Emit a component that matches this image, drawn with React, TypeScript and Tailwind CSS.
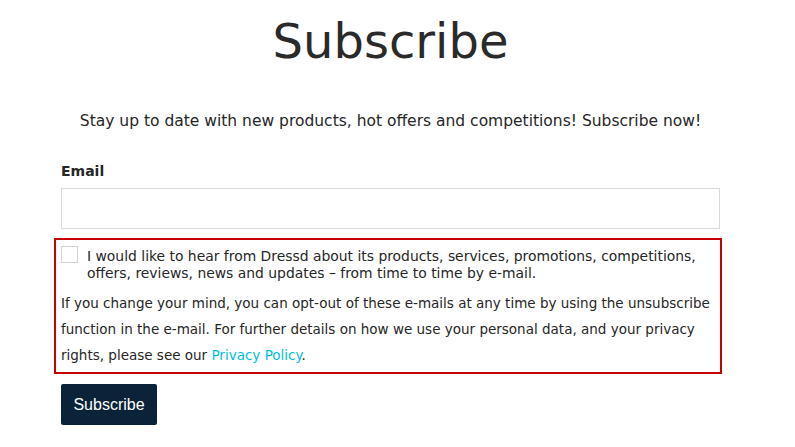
export default function App() {
  return (
    <div className="w-[795px] h-[447px] bg-white text-[#262626] font-['DejaVu_Sans',sans-serif] overflow-hidden">
      <div className="ml-[54px] w-[668px]">
        <div className="ml-[7px] w-[659px]">
          <h1 className="mt-[17px] text-center text-[48px] leading-[48px] font-normal text-[#2a2a2a]">
            Subscribe
          </h1>
          <p className="mt-[44px] text-center text-[15.5px] leading-[24px]">
            Stay up to date with new products, hot offers and competitions! Subscribe now!
          </p>
          <label className="block mt-[28px] text-[14px] leading-[20px] font-bold">Email</label>
          <input
            type="email"
            className="mt-[7px] block w-full h-[41px] border border-[#dadada] bg-white outline-none"
          />
        </div>

        <div className="mt-[9px] border-2 border-[#c40000] pl-[5px] pr-[6px] pt-[6px] pb-[4px]">
          <div className="flex items-start gap-[9px]">
            <span className="w-[17px] h-[17px] shrink-0 border border-[#d2d2d2] bg-white" />
            <span className="mt-[2px] text-[13.9px] leading-[17px]">
              I would like to hear from Dressd about its products, services, promotions, competitions,
              offers, reviews, news and updates – from time to time by e-mail.
            </span>
          </div>
          <p className="mt-[8px] text-[13.5px] leading-[26px]">
            If you change your mind, you can opt-out of these e-mails at any time by using the unsubscribe
            function in the e-mail. For further details on how we use your personal data, and your privacy
            rights, please see our <a className="text-[#00c2d6]">Privacy Policy</a>.
          </p>
        </div>

        <button className="ml-[7px] mt-[10px] w-[96px] h-[41px] rounded-[2px] bg-[#0a2338] text-white text-[16px] font-['Liberation_Sans',sans-serif]">
          Subscribe
        </button>
      </div>
    </div>
  );
}
